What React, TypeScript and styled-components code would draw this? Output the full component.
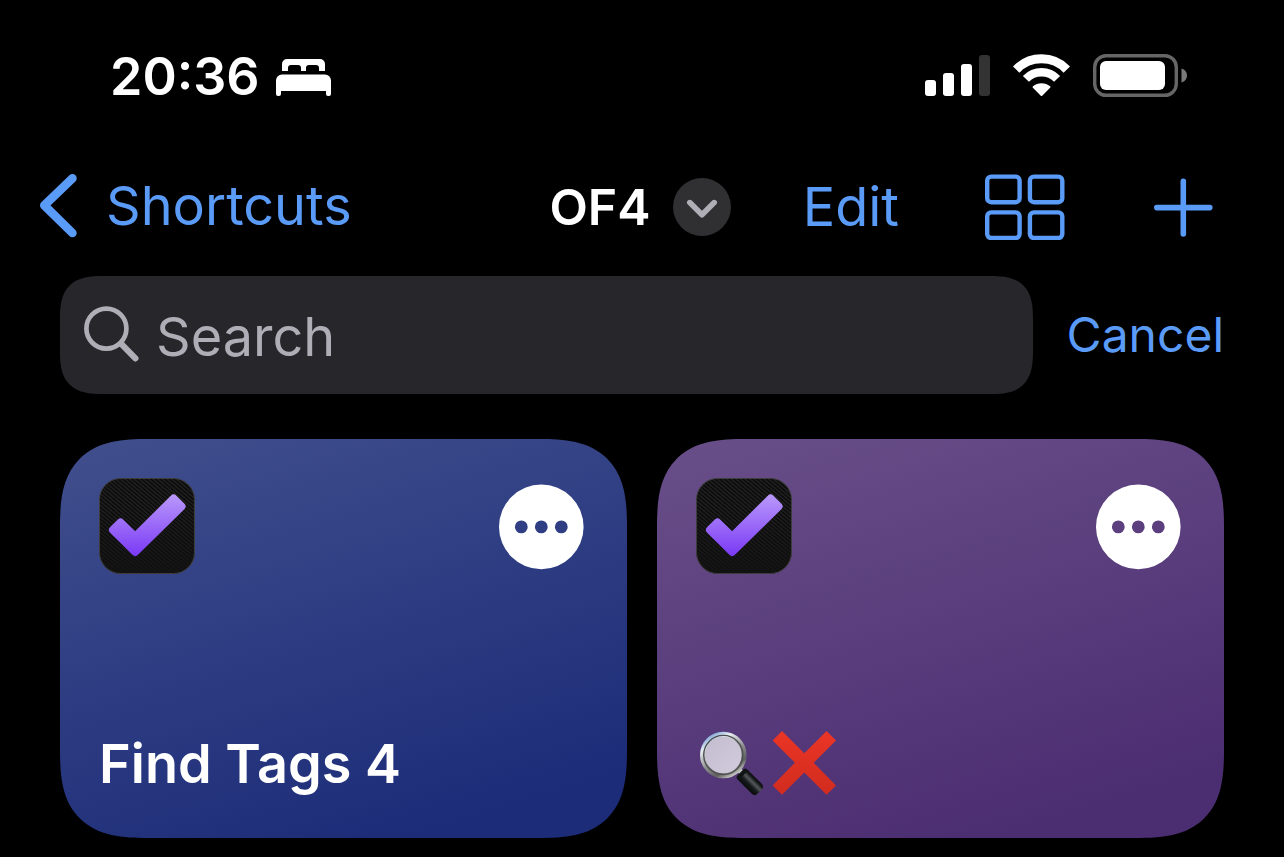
import React from "react";
import styled, { createGlobalStyle } from "styled-components";

const BLUE = "#5a9bf8";
const GREY = "#afaeb6";

const GlobalStyle = createGlobalStyle`
  *, *::before, *::after { box-sizing: border-box; }
  body {
    margin: 0;
    background: #000;
    color: #fff;
    font-family: Inter, "Liberation Sans", sans-serif;
  }
  button, input { font: inherit; }
  svg { display: block; flex: none; }
`;

const Screen = styled.div`
  display: flex;
  flex-direction: column;
  min-height: 100vh;
  padding: 54px 0 19px;
`;

const StatusBar = styled.header`
  display: flex;
  justify-content: space-between;
  align-items: flex-start;
  padding: 0 96px 0 110px;
`;

const Clock = styled.div`
  display: flex;
  align-items: center;
  gap: 16px;
  font-size: 52px;
  font-weight: 600;
  line-height: 46px;
`;

const Indicators = styled.div`
  display: flex;
  align-items: flex-start;
  gap: 22px;
`;

const NavBar = styled.nav`
  display: grid;
  grid-template-columns: 1fr auto 1fr;
  align-items: center;
  padding: 0 44px 0 40px;
  margin-top: 74px;
`;

const BackLink = styled.a`
  display: flex;
  align-items: center;
  gap: 28px;
  align-self: start;
  color: ${BLUE};
  font-size: 54px;
  line-height: 64px;
  text-decoration: none;
`;

const TitleGroup = styled.div`
  display: flex;
  align-items: center;
  gap: 22px;
`;

const Title = styled.h1`
  margin: 0;
  font-size: 50px;
  font-weight: 600;
  line-height: 60px;
`;

const PlainButton = styled.button`
  padding: 0;
  border: 0;
  background: none;
  color: ${BLUE};
  cursor: pointer;
`;

const TextButton = styled(PlainButton)<{ $size: number }>`
  font-size: ${(p) => p.$size}px;
  line-height: 66px;
`;

const RoundButton = styled(PlainButton)`
  display: flex;
  align-items: center;
  justify-content: center;
  width: 58px;
  height: 58px;
  border-radius: 50%;
  background: #303033;
  color: ${GREY};
`;

const Actions = styled.div`
  display: flex;
  align-items: center;
  justify-content: flex-end;
  gap: 86px;
  padding-right: 25px;
`;

const SearchRow = styled.form`
  display: flex;
  align-items: center;
  gap: 34px;
  padding: 0 60px;
  margin-top: 36px;
`;

const SearchField = styled.label`
  display: flex;
  flex: 1;
  align-items: center;
  gap: 16px;
  min-width: 0;
  height: 118px;
  padding: 0 24px;
  border-radius: 32px;
  background: #27262b;
  color: ${GREY};

  @supports (corner-shape: squircle) {
    border-radius: 44px;
    corner-shape: superellipse(1.5);
  }
`;

const SearchInput = styled.input`
  flex: 1;
  min-width: 0;
  height: 72px;
  padding: 2px 0 0;
  border: 0;
  outline: 0;
  background: none;
  color: #fff;
  font-size: 54px;

  &::placeholder {
    color: ${GREY};
    opacity: 1;
  }
`;

const CardGrid = styled.main`
  display: grid;
  grid-template-columns: 1fr 1fr;
  gap: 30px;
  padding: 0 60px;
  margin-top: 45px;
`;

const Card = styled.article<{ $from: string; $to: string }>`
  display: flex;
  flex-direction: column;
  justify-content: space-between;
  min-height: 399px;
  padding: 39px 43px 40px 39px;
  border-radius: 68px;
  background: linear-gradient(163deg, ${(p) => p.$from}, ${(p) => p.$to} 88%);

  @supports (corner-shape: squircle) {
    border-radius: 88px;
    corner-shape: superellipse(1.45);
  }
`;

const CardTop = styled.div`
  display: flex;
  align-items: center;
  justify-content: space-between;
`;

const CardTitle = styled.h2`
  display: flex;
  align-items: center;
  gap: 6px;
  margin: 0;
  min-height: 68px;
  font-size: 54px;
  font-weight: 600;
  line-height: 68px;
`;

const BedIcon = () => (
  <svg width="55" height="38" viewBox="0 0 55 38" fill="#fff" role="img" aria-label="Sleep">
    <path d="M6 13V6a5 5 0 0 1 5-5h33a5 5 0 0 1 5 5v7h-6V10a3 3 0 0 0-3-3h-7a3 3 0 0 0-3 3v3h-5V10a3 3 0 0 0-3-3h-7a3 3 0 0 0-3 3v3z" />
    <path d="M0 22.500a6 6 0 0 1 6-6h43a6 6 0 0 1 6 6v13.500a2 2 0 0 1-2 2h-1a2 2 0 0 1-2-2V33H5v3a2 2 0 0 1-2 2H2a2 2 0 0 1-2-2z" />
  </svg>
);

const SignalIcon = () => (
  <svg width="66" height="42" viewBox="0 0 66 42" fill="#fff" role="img" aria-label="Signal, three of four bars">
    <rect x="0" y="26" width="11" height="16" rx="3" />
    <rect x="18" y="19" width="11" height="23" rx="3" />
    <rect x="36" y="10" width="11" height="32" rx="3" />
    <rect x="54" y="1" width="11" height="41" rx="3" fill="#333" />
  </svg>
);

const WifiIcon = () => (
  <svg width="58" height="42" viewBox="0 0 58 42" role="img" aria-label="Wi-Fi">
    <g fill="none" stroke="#fff">
      <path d="M3.200 15.600A35.200 35.200 0 0 1 53.800 15.600" strokeWidth="9" />
      <path d="M12.900 24.800A21.700 21.700 0 0 1 44.100 24.800" strokeWidth="8.400" />
    </g>
    <path d="M28.500 41 20.600 33.100A12 12 0 0 1 36.400 33.100Z" fill="#fff" stroke="#fff" strokeWidth="2" strokeLinejoin="round" />
  </svg>
);

const BatteryIcon = () => (
  <svg width="95" height="43" viewBox="0 0 95 43" role="img" aria-label="Battery">
    <rect x="1.700" y="1.700" width="81.600" height="39.600" rx="11.500" fill="none" stroke="#666" strokeWidth="3.400" />
    <rect x="7" y="7" width="65" height="29" rx="6" fill="#fff" />
    <path d="M88.500 14.500C92 15.500 94 18.500 94 21.500S92 27.500 88.500 28.500Z" fill="#7a7a7a" />
  </svg>
);

const BackIcon = () => (
  <svg width="38" height="64" viewBox="0 0 38 64" fill="none" stroke="currentColor" strokeWidth="8.600" strokeLinecap="round" strokeLinejoin="round" aria-hidden="true">
    <path d="M32.400 4.300 4.300 31.400 32.400 59" />
  </svg>
);

const DownIcon = () => (
  <svg width="58" height="58" viewBox="0 0 58 58" fill="none" stroke="currentColor" strokeWidth="5.600" strokeLinecap="round" strokeLinejoin="round" aria-hidden="true">
    <path d="M16.800 24.600 29 36.800 41.200 24.600" />
  </svg>
);

const GridIcon = () => (
  <svg width="80" height="66" viewBox="0 0 80 66" fill="none" stroke="currentColor" strokeWidth="4.400" aria-hidden="true">
    <rect x="2.200" y="2.600" width="32.400" height="25.600" rx="4" />
    <rect x="44.900" y="2.600" width="32.400" height="25.600" rx="4" />
    <rect x="2.200" y="38.400" width="32.400" height="25.600" rx="4" />
    <rect x="44.900" y="38.400" width="32.400" height="25.600" rx="4" />
  </svg>
);

const PlusIcon = () => (
  <svg width="64" height="64" viewBox="0 0 64 64" fill="none" stroke="currentColor" strokeWidth="5.600" strokeLinecap="round" aria-hidden="true">
    <path d="M5.800 32.600H58.800M32.300 6.200V59" />
  </svg>
);

const SearchIcon = () => (
  <svg width="56" height="58" viewBox="0 -1 56 58" fill="none" stroke="currentColor" strokeLinecap="round" aria-hidden="true">
    <circle cx="22.400" cy="21.600" r="20" strokeWidth="4.700" />
    <path d="M38 37.600 51.400 51.400" strokeWidth="6.200" />
  </svg>
);

const CheckAppIcon = ({ id }: { id: string }) => (
  <svg width="96" height="96" viewBox="0 0 96 96" aria-hidden="true">
    <defs>
      <pattern id={`${id}-weave`} width="3" height="3" patternUnits="userSpaceOnUse" patternTransform="rotate(40)">
        <rect width="3" height="3" fill="#202020" />
        <rect width="3" height="1.200" fill="#050505" />
      </pattern>
      <linearGradient id={`${id}-shade`} x1="0" y1="0" x2="0" y2="1">
        <stop offset="0.300" stopColor="#111" stopOpacity="0" />
        <stop offset="1" stopColor="#111" stopOpacity="0.800" />
      </linearGradient>
      <linearGradient id={`${id}-tick`} gradientUnits="userSpaceOnUse" x1="0" y1="15" x2="0" y2="80">
        <stop offset="0" stopColor="#bb9bfb" />
        <stop offset="1" stopColor="#7836f5" />
      </linearGradient>
    </defs>
    <rect x="0.500" y="0.500" width="95" height="95" rx="21" fill={`url(#${id}-weave)`} />
    <rect x="0.500" y="0.500" width="95" height="95" rx="21" fill={`url(#${id}-shade)`} stroke="#3d3d3b" />
    <path
      d="M14 51.800 36.200 74 82.500 28.300 74.600 20.600 36.100 58.800 21.600 44.500Z"
      fill={`url(#${id}-tick)`}
      stroke={`url(#${id}-tick)`}
      strokeWidth="8"
      strokeLinejoin="round"
    />
  </svg>
);

const MoreIcon = () => (
  <svg width="86" height="88" viewBox="0 -2 86 88" fill="#fff" fillRule="evenodd" aria-hidden="true">
    <path d="M43.300 .6a42.300 42.300 0 1 1 0 84.600a42.300 42.300 0 1 1 0-84.600ZM23.300 36.500a6.400 6.400 0 1 0 0 12.800a6.400 6.400 0 1 0 0-12.800ZM43.300 36.500a6.400 6.400 0 1 0 0 12.800a6.400 6.400 0 1 0 0-12.800ZM63.300 36.500a6.400 6.400 0 1 0 0 12.800a6.400 6.400 0 1 0 0-12.800Z" />
  </svg>
);

const MagnifierEmoji = () => (
  <svg width="70" height="66" viewBox="0 0 70 66" role="img" aria-label="Magnifying glass">
    <defs>
      <linearGradient id="rim" x1="0.200" y1="0" x2="0.800" y2="1">
        <stop offset="0" stopColor="#7fa6d8" />
        <stop offset="0.200" stopColor="#e8eef2" />
        <stop offset="0.550" stopColor="#8c8c8c" />
        <stop offset="0.800" stopColor="#5e605f" />
        <stop offset="1" stopColor="#d5d5d0" />
      </linearGradient>
      <linearGradient id="glass" x1="0" y1="0" x2="1" y2="1">
        <stop offset="0" stopColor="#c3bccf" />
        <stop offset="1" stopColor="#d3ccdd" />
      </linearGradient>
      <linearGradient id="grip" x1="0" y1="1" x2="0" y2="0">
        <stop offset="0" stopColor="#0a0c0c" />
        <stop offset="0.350" stopColor="#171a1a" />
        <stop offset="0.620" stopColor="#54585a" />
        <stop offset="0.850" stopColor="#16191a" />
        <stop offset="1" stopColor="#0a0c0c" />
      </linearGradient>
    </defs>
    <path d="M40 36 48 44" stroke="#c4c4c0" strokeWidth="5" />
    <circle cx="27.300" cy="24" r="20.800" fill="url(#glass)" stroke="url(#rim)" strokeWidth="5" />
    <circle cx="27.300" cy="24" r="19.600" fill="none" stroke="#4d4f50" strokeWidth="1.400" />
    <g transform="translate(44.500 41.500) rotate(45)">
      <rect x="0" y="-7" width="27" height="14" rx="4" fill="url(#grip)" />
      <rect x="0" y="-6.800" width="4" height="13.600" rx="2" fill="#101414" />
    </g>
  </svg>
);

const CrossEmoji = () => (
  <svg width="65" height="66" viewBox="0 0 65 66" role="img" aria-label="Cross mark">
    <defs>
      <linearGradient id="cross" x1="0" y1="0" x2="0" y2="1">
        <stop offset="0" stopColor="#ea3526" />
        <stop offset="1" stopColor="#d12c1e" />
      </linearGradient>
    </defs>
    <path
      d="M10 0 32.300 22.300 54.600 0 64 9.400 41.700 31.700 64 54.400 54.600 63.800 32.300 41.400 10 63.800 .6 54.400 22.900 31.700 .6 9.400Z"
      fill="url(#cross)"
    />
  </svg>
);

const shortcuts = [
  { id: "tags", from: "#414f8d", to: "#1c2c78", name: "Find Tags 4", title: <>Find Tags 4</> },
  {
    id: "clear",
    from: "#694f89",
    to: "#4b2d71",
    name: "Magnifying glass, cross mark",
    title: (
      <>
        <MagnifierEmoji />
        <CrossEmoji />
      </>
    ),
  },
];

export default function App() {
  return (
    <>
      <GlobalStyle />
      <Screen>
        <StatusBar>
          <Clock>
            <time>20:36</time>
            <BedIcon />
          </Clock>
          <Indicators>
            <SignalIcon />
            <WifiIcon />
            <BatteryIcon />
          </Indicators>
        </StatusBar>

        <NavBar>
          <BackLink href="#shortcuts">
            <BackIcon />
            Shortcuts
          </BackLink>
          <TitleGroup>
            <Title>OF4</Title>
            <RoundButton type="button" aria-label="Folder options">
              <DownIcon />
            </RoundButton>
          </TitleGroup>
          <Actions>
            <TextButton type="button" $size={54}>
              Edit
            </TextButton>
            <PlainButton type="button" aria-label="Grid view">
              <GridIcon />
            </PlainButton>
            <PlainButton type="button" aria-label="New shortcut">
              <PlusIcon />
            </PlainButton>
          </Actions>
        </NavBar>

        <SearchRow role="search">
          <SearchField>
            <SearchIcon />
            <SearchInput type="text" placeholder="Search" aria-label="Search" />
          </SearchField>
          <TextButton type="button" $size={48}>
            Cancel
          </TextButton>
        </SearchRow>

        <CardGrid>
          {shortcuts.map((s) => (
            <Card key={s.id} $from={s.from} $to={s.to}>
              <CardTop>
                <CheckAppIcon id={s.id} />
                <PlainButton type="button" aria-label={`Edit ${s.name}`}>
                  <MoreIcon />
                </PlainButton>
              </CardTop>
              <CardTitle>{s.title}</CardTitle>
            </Card>
          ))}
        </CardGrid>
      </Screen>
    </>
  );
}
